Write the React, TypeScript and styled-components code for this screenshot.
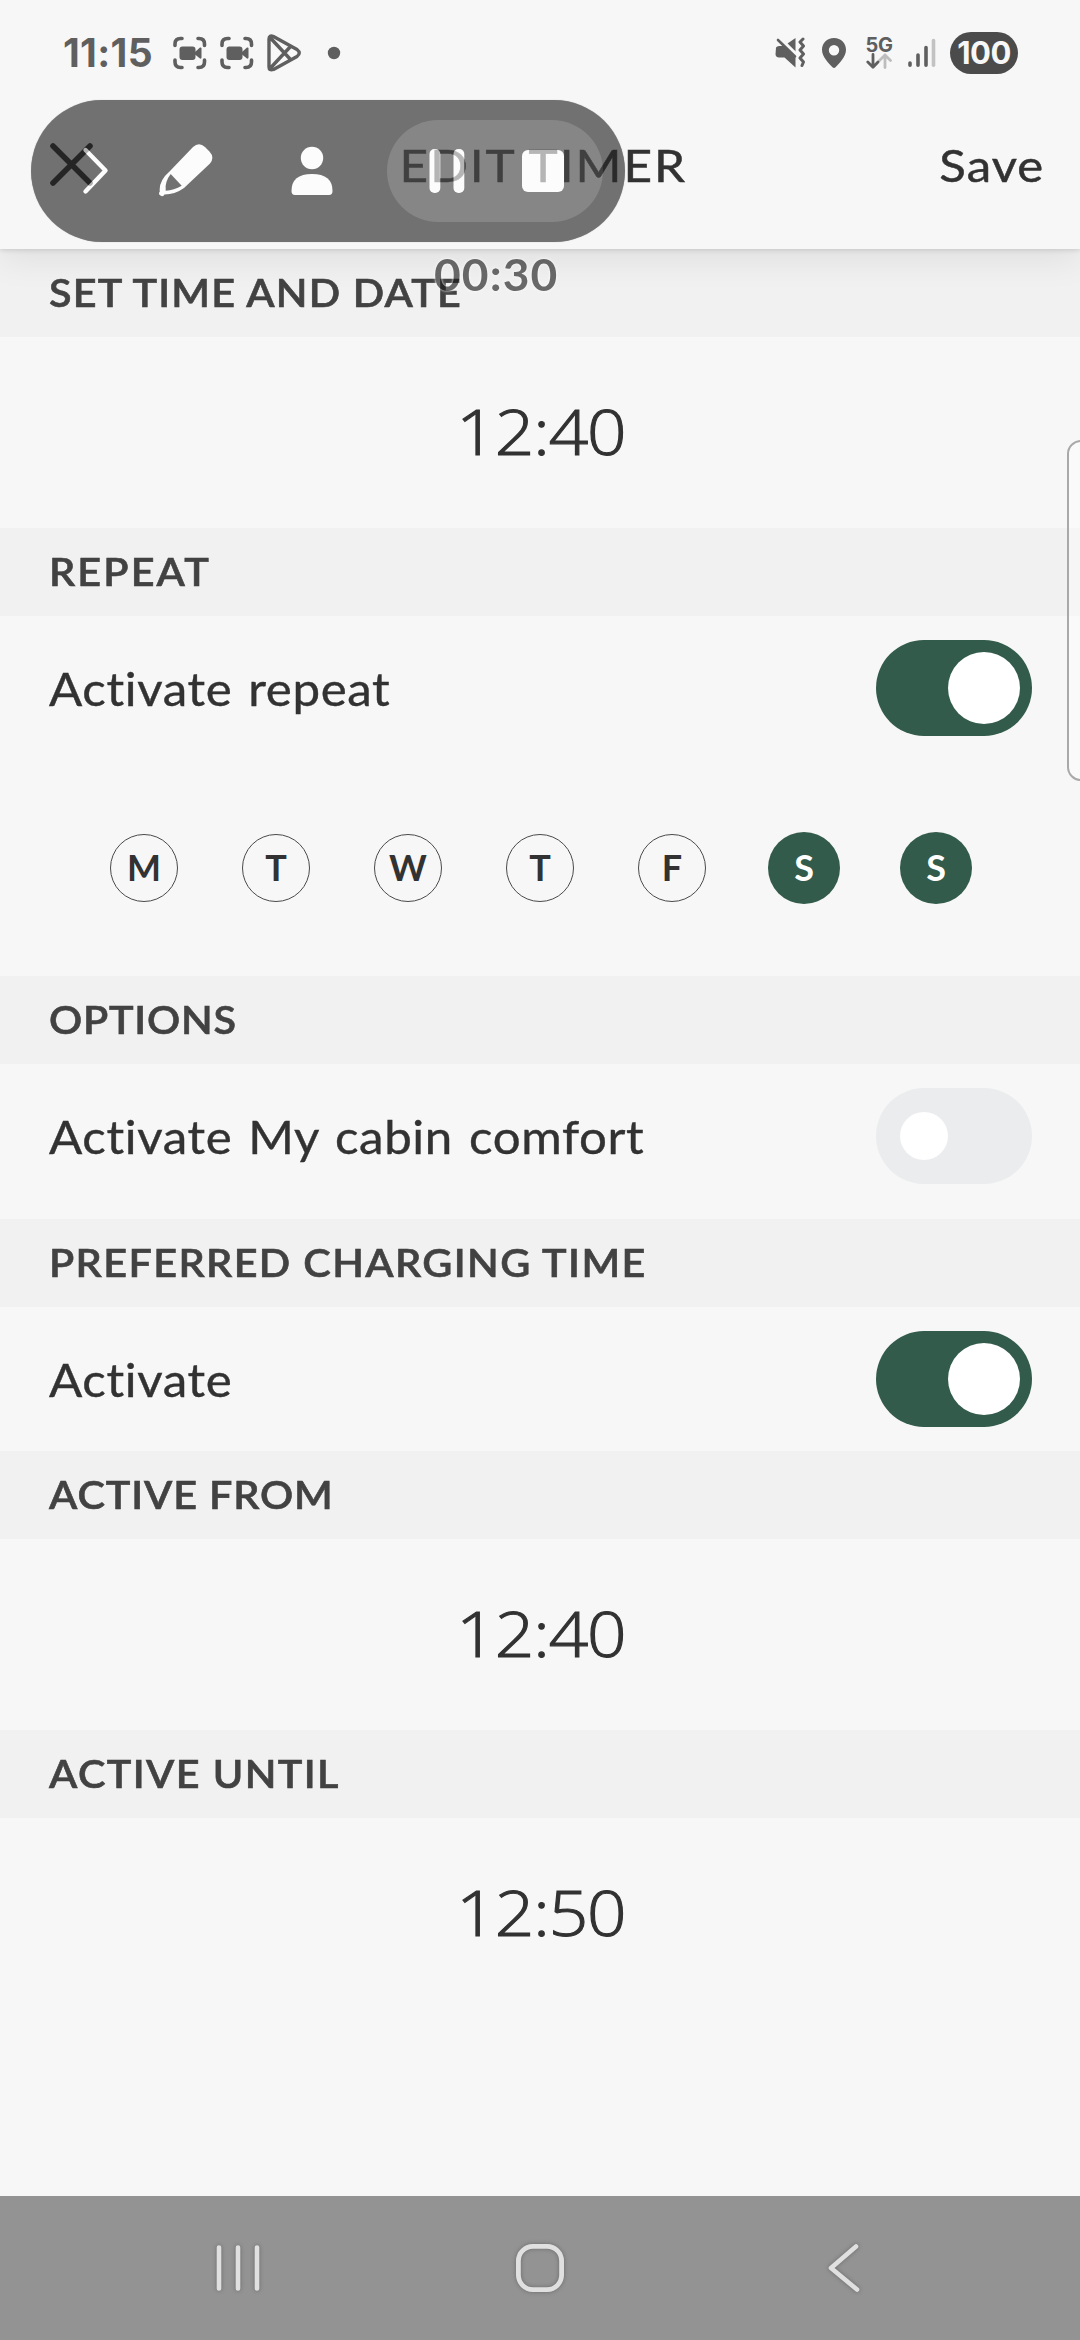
import React from 'react';
import styled, { createGlobalStyle } from 'styled-components';

const GlobalStyle = createGlobalStyle`
  * { box-sizing: border-box; }
  body { margin: 0; background: #f7f7f7; }
`;

const green = '#325b4b';
const ink = '#323232';
const statusInk = '#5f5f5f';
const labelFont = `Lato, 'Liberation Sans', sans-serif`;
const digitFont = `'Open Sans', 'Noto Sans', sans-serif`;
const systemFont = `Inter, Roboto, sans-serif`;

const Screen = styled.div`
  position: relative;
  display: flex;
  flex-direction: column;
  width: 1080px;
  height: 2340px;
  overflow: hidden;
  background: #f7f7f7;
  color: ${ink};
  font-family: ${labelFont};
`;

const TopArea = styled.header`
  position: relative;
  flex: none;
  height: 249px;
  background: #f7f7f7;
  box-shadow: 0 1px 5px rgba(0, 0, 0, 0.14), 0 12px 32px rgba(0, 0, 0, 0.07);
`;

const StatusBar = styled.div`
  display: flex;
  align-items: center;
  justify-content: space-between;
  height: 106px;
  padding: 0 62px 0 63px;
  color: ${statusInk};
`;

const StatusGroup = styled.div`
  display: flex;
  align-items: center;
`;

const Clock = styled.span`
  width: 108px;
  font: 700 39px/106px ${systemFont};
  letter-spacing: 0.3px;
  white-space: nowrap;
`;

const StatusIcon = styled.svg<{ $gap?: number }>`
  flex: none;
  display: block;
  margin-left: ${(p) => p.$gap ?? 0}px;
`;

const Network = styled.div`
  display: flex;
  flex-direction: column;
  align-items: center;
  width: 28px;
  margin-left: 18px;
  font: 700 20px/16px ${systemFont};
  letter-spacing: -0.5px;
`;

const Battery = styled.span`
  width: 68px;
  height: 42px;
  margin-left: 14px;
  border-radius: 21px;
  background: #4b4b4b;
  color: #f7f7f7;
  font: 700 31px/42px ${systemFont};
  letter-spacing: -0.6px;
  text-align: center;
`;

const TitleBar = styled.div`
  display: grid;
  grid-template-columns: 1fr auto 1fr;
  align-items: center;
  height: 116px;
  padding: 0 36px 0 50px;
`;

const CloseIcon = styled.svg`
  display: block;
`;

const Title = styled.h1`
  margin: 0;
  padding: 2px 7px 0 0;
  font: 400 45px/54px ${labelFont};
  letter-spacing: 1.8px;
  white-space: nowrap;
  transform: scaleX(1.1);
  -webkit-text-stroke: 0.5px ${ink};
`;

const SaveButton = styled.button`
  justify-self: end;
  padding: 2px 0 0;
  border: 0;
  background: none;
  color: ${ink};
  font: 400 45px/54px ${labelFont};
  letter-spacing: 1px;
  transform: scaleX(1.09);
  transform-origin: right;
  -webkit-text-stroke: 0.5px ${ink};
`;

const SectionHeader = styled.h2`
  flex: none;
  height: 88px;
  margin: 0;
  padding-left: 49px;
  background: #f1f1f1;
  color: #424242;
  font: 600 39px/86px ${labelFont};
  white-space: nowrap;
`;

const SectionTitle = styled.span<{ $spacing: number }>`
  display: inline-block;
  letter-spacing: ${(p) => p.$spacing}px;
  transform: scaleX(1.06);
  transform-origin: left;
  -webkit-text-stroke: 0.6px #424242;
`;

const TimeRow = styled.div`
  display: flex;
  flex: none;
  justify-content: center;
  height: 191px;
  padding-left: 2px;
`;

const TimeValue = styled.span`
  font: 300 63px/187px ${digitFont};
  letter-spacing: -1px;
  transform: scaleX(1.1);
  -webkit-text-stroke: 1.1px ${ink};
`;

const SettingRow = styled.div<{ $after?: number }>`
  display: flex;
  flex: none;
  align-items: center;
  justify-content: space-between;
  height: 144px;
  margin-bottom: ${(p) => p.$after ?? 0}px;
  padding: 0 48px 0 49px;
`;

const SettingLabel = styled.span`
  padding-top: 2px;
  font: 400 46px/56px ${labelFont};
  letter-spacing: 0.6px;
  word-spacing: 2.6px;
  white-space: nowrap;
  transform: scaleX(1.07);
  transform-origin: left;
  -webkit-text-stroke: 0.4px ${ink};
`;

const Toggle = styled.span<{ $on: boolean }>`
  display: flex;
  align-items: center;
  justify-content: ${(p) => (p.$on ? 'flex-end' : 'flex-start')};
  width: 156px;
  height: 96px;
  padding: 0 ${(p) => (p.$on ? 12 : 24)}px;
  border-radius: 48px;
  background: ${(p) => (p.$on ? green : '#ebeced')};
`;

const Knob = styled.span<{ $on: boolean }>`
  width: ${(p) => (p.$on ? 72 : 48)}px;
  height: ${(p) => (p.$on ? 72 : 48)}px;
  border-radius: 50%;
  background: #fff;
`;

const Days = styled.div`
  display: grid;
  flex: none;
  grid-template-columns: repeat(7, 132px);
  place-content: center;
  place-items: center;
  height: 216px;
`;

const Day = styled.span<{ $on: boolean }>`
  width: ${(p) => (p.$on ? 72 : 68)}px;
  height: ${(p) => (p.$on ? 72 : 68)}px;
  border: ${(p) => (p.$on ? '0' : '1.4px solid #4a4a4a')};
  border-radius: 50%;
  background: ${(p) => (p.$on ? green : 'transparent')};
  color: ${(p) => (p.$on ? '#fff' : ink)};
  font: 700 36px/${(p) => (p.$on ? 71 : 65)}px ${labelFont};
  text-align: center;
`;

const NavBar = styled.nav`
  display: grid;
  flex: none;
  grid-template-columns: repeat(3, 302px);
  place-content: center;
  place-items: center;
  height: 144px;
  margin-top: auto;
  background: #939393;
`;

const NavIcon = styled.svg`
  display: block;
  filter: drop-shadow(0 0 2px rgba(0, 0, 0, 0.28));
`;

const EdgeHandle = styled.div`
  position: absolute;
  top: 440px;
  right: -30px;
  width: 43px;
  height: 341px;
  border: 2.5px solid #a9a9a9;
  border-radius: 14px;
  background: rgba(255, 255, 255, 0.4);
`;

const Recorder = styled.div`
  position: absolute;
  top: 100px;
  left: 31px;
  width: 594px;
  opacity: 0.64;
`;

const RecorderBar = styled.div`
  display: flex;
  align-items: center;
  height: 142px;
  padding: 0 22px 0 51px;
  border-radius: 71px;
  background: #272727;
  box-shadow: 0 0 1px rgba(0, 0, 0, 0.5);
`;

const RecorderIcon = styled.svg<{ $gap?: number }>`
  flex: none;
  display: block;
  margin-left: ${(p) => p.$gap ?? 0}px;
`;

const RecorderControls = styled.div`
  display: flex;
  align-items: center;
  width: 216px;
  height: 102px;
  margin-left: auto;
  padding: 0 39px 0 42px;
  justify-content: space-between;
  border-radius: 51px;
  background: #484848;
`;

const Elapsed = styled.div`
  width: max-content;
  margin: 5px 0 0 403px;
  color: #1c1c1c;
  font: 700 44px/54px ${labelFont};
  letter-spacing: 1px;
  text-shadow: 0 0 3px #fff, 0 0 2px #fff;
  transform: scaleX(1.05);
  transform-origin: left;
`;

const RecordStatus = ({ gap }: { gap: number }) => (
  <StatusIcon $gap={gap} width="34" height="34" viewBox="0 0 34 34">
    <g fill="none" stroke={statusInk} strokeWidth="3.6" strokeLinecap="round">
      <path d="M2 9.5V8q0-5.500 5.500-5.500H9M25 2.500h1q5.500 0 5.500 5.500v1.500M2 24v2q0 5.500 5.500 5.500H9M25 31.500h1q5.500 0 5.500-5.500V24" />
    </g>
    <rect x="6.500" y="10.500" width="16" height="13.500" rx="3" fill={statusInk} />
    <path d="M22 16l5-4.500q1.500-.5 1.500 1v9q0 1.500-1.500 1l-5-4z" fill={statusInk} />
  </StatusIcon>
);

const PlayStatus = () => (
  <StatusIcon $gap={12} width="36" height="38" viewBox="0 0 36 38" fill="none" stroke={statusInk} strokeWidth="3.400" strokeLinejoin="round">
    <path d="M3 5Q3 .5 7.500 2.500L31 15.500q4.500 3.500 0 7L7.500 35.500Q3 37 3 33zM4 3.500l21 22.500M4 34.500L25 12" />
  </StatusIcon>
);

const MuteStatus = () => (
  <StatusIcon width="31" height="32" viewBox="0 0 31 32">
    <path d="M1 10.500q1-1.500 3-1.500h4.500L20.500 21v9.500L9.500 20.500H4q-3 0-3.500-3zM12.500 6.500L20.500 1v14z" fill={statusInk} />
    <path d="M3 3l18 17" stroke="#f7f7f7" strokeWidth="2" transform="translate(2 -2)" />
    <path d="M3 3l17 16.500" stroke={statusInk} strokeWidth="2.600" strokeLinecap="round" />
    <path d="M28 2l-3 3 3.500 4-3.500 4 3.500 4-3.500 4 3.500 4-1.500 3.500" fill="none" stroke={statusInk} strokeWidth="3" strokeLinejoin="round" strokeLinecap="round" />
  </StatusIcon>
);

const PinStatus = () => (
  <StatusIcon $gap={15} width="26" height="32" viewBox="0 0 26 32">
    <path fillRule="evenodd" d="M13 1C5.800 1 1 6.200 1 12.800 1 20 8 26.500 11.500 30.300q1.500 1.400 3 0C18 26.500 25 20 25 12.800 25 6.200 20.200 1 13 1zm0 7a5.200 5.200 0 110 10.400A5.200 5.200 0 0113 8z" fill={statusInk} />
  </StatusIcon>
);

const DataArrows = () => (
  <StatusIcon width="26" height="16" viewBox="0 0 26 16" fill="none" strokeWidth="2.800" strokeLinecap="round" strokeLinejoin="round">
    <path d="M19 14.500V2M13.500 7.500L19 2l5.500 5.500" stroke="#bdbdbd" />
    <path d="M7 1.500V14M1.800 9L7 14.200 12 9" stroke={statusInk} />
  </StatusIcon>
);

const SignalStatus = () => (
  <StatusIcon $gap={15} width="28" height="30" viewBox="0 0 28 30" strokeWidth="3.600" strokeLinecap="round">
    <path d="M2 25v2.200M10 17v10.200M18 9.500v17.700" stroke={statusInk} />
    <path d="M25.500 2.500v24.700" stroke="#c2c2c2" />
  </StatusIcon>
);

const Section = ({ title, spacing }: { title: string; spacing: number }) => (
  <SectionHeader>
    <SectionTitle $spacing={spacing}>{title}</SectionTitle>
  </SectionHeader>
);

const Time = ({ value }: { value: string }) => (
  <TimeRow>
    <TimeValue>{value}</TimeValue>
  </TimeRow>
);

const Setting = ({ label, on, after }: { label: string; on: boolean; after?: number }) => (
  <SettingRow $after={after}>
    <SettingLabel>{label}</SettingLabel>
    <Toggle $on={on} role="switch" aria-checked={on}>
      <Knob $on={on} />
    </Toggle>
  </SettingRow>
);

const days = [
  ['M', false], ['T', false], ['W', false], ['T', false], ['F', false], ['S', true], ['S', true],
] as const;

export default function App() {
  return (
    <>
      <GlobalStyle />
      <Screen>
        <TopArea>
          <StatusBar>
            <StatusGroup>
              <Clock>11:15</Clock>
              <RecordStatus gap={2} />
              <RecordStatus gap={13} />
              <PlayStatus />
              <StatusIcon $gap={25} width="14" height="14" viewBox="0 0 14 14">
                <circle cx="7" cy="7" r="6.200" fill={statusInk} />
              </StatusIcon>
            </StatusGroup>
            <StatusGroup>
              <MuteStatus />
              <PinStatus />
              <Network>
                5G
                <DataArrows />
              </Network>
              <SignalStatus />
              <Battery>100</Battery>
            </StatusGroup>
          </StatusBar>
          <TitleBar>
            <CloseIcon width="43" height="43" viewBox="0 0 43 43" stroke="#242424" strokeWidth="5.600" strokeLinecap="round">
              <path d="M3 3l37 37M40 3L3 40" />
            </CloseIcon>
            <Title>EDIT TIMER</Title>
            <SaveButton>Save</SaveButton>
          </TitleBar>
        </TopArea>

        <Section title="SET TIME AND DATE" spacing={1.1} />
        <Time value="12:40" />
        <Section title="REPEAT" spacing={2} />
        <Setting label="Activate repeat" on />
        <Days>
          {days.map(([name, on], i) => (
            <Day key={i} $on={on}>{name}</Day>
          ))}
        </Days>
        <Section title="OPTIONS" spacing={0.7} />
        <Setting label="Activate My cabin comfort" on={false} after={11} />
        <Section title="PREFERRED CHARGING TIME" spacing={1.3} />
        <Setting label="Activate" on />
        <Section title="ACTIVE FROM" spacing={0.8} />
        <Time value="12:40" />
        <Section title="ACTIVE UNTIL" spacing={1.3} />
        <Time value="12:50" />

        <NavBar>
          <NavIcon width="50" height="56" viewBox="0 0 50 56" stroke="#e0e0e0" strokeWidth="4.600" strokeLinecap="round">
            <path d="M6 7.500v41M25 7.500v41M44 7.500v41" />
          </NavIcon>
          <NavIcon width="56" height="56" viewBox="0 0 56 56" fill="none" stroke="#e0e0e0" strokeWidth="4.800">
            <rect x="6.400" y="6.400" width="43.200" height="43.200" rx="14.500" />
          </NavIcon>
          <NavIcon width="40" height="56" viewBox="0 0 40 56" fill="none" stroke="#e0e0e0" strokeWidth="4.600" strokeLinecap="round">
            <path d="M34 6.500L9 28l26 21.500" strokeLinejoin="round" />
          </NavIcon>
        </NavBar>

        <EdgeHandle />

        <Recorder>
          <RecorderBar>
            <RecorderIcon width="28" height="50" viewBox="0 0 28 50" fill="none" stroke="#fff" strokeWidth="4.400" strokeLinecap="round" strokeLinejoin="round">
              <path d="M3.500 4L23.500 24.500 3.500 45.500" />
            </RecorderIcon>
            <RecorderIcon $gap={47} width="58" height="58" viewBox="0 0 58 58">
              <path d="M13 29L36 5q6-5.500 12 0l4.500 4.500q5.500 6 0.500 12L27 46Q18 52.500 7.500 52.500A2.800 2.800 0 112.800 49.500Q1.500 39 13 29z" fill="#fff" />
              <path d="M13.700 32L24.700 43.700Q17 48 8.700 48.700 7.500 40 13.700 32z" fill="#272727" />
            </RecorderIcon>
            <RecorderIcon $gap={73} width="48" height="52" viewBox="0 0 48 52" fill="#fff">
              <circle cx="24" cy="13" r="11.200" />
              <path d="M3.500 46q0-17 20.500-17t20.500 17q0 4-3.500 4H7q-3.500 0-3.500-4z" />
            </RecorderIcon>
            <RecorderControls>
              <RecorderIcon width="36" height="46" viewBox="0 0 36 46" fill="#fff">
                <rect x="0.500" y="1" width="10.800" height="44" rx="5" />
                <rect x="24.500" y="1" width="10.800" height="44" rx="5" />
              </RecorderIcon>
              <RecorderIcon width="42" height="42" viewBox="0 0 42 42" fill="#fff">
                <rect width="42" height="42" rx="6" />
              </RecorderIcon>
            </RecorderControls>
          </RecorderBar>
          <Elapsed>00:30</Elapsed>
        </Recorder>
      </Screen>
    </>
  );
}
